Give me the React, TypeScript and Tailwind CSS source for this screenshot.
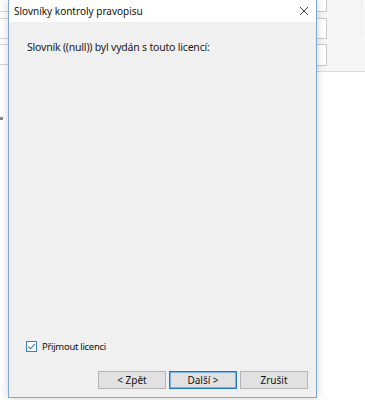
import React from "react";

const font = { fontFamily: '"Noto Sans", "Open Sans", Arial, sans-serif' };

function Btn({ children, primary }: { children: React.ReactNode; primary?: boolean }) {
  return (
    <div
      className={
        "w-[68px] h-[18px] flex items-center justify-center text-[10px] text-[#111] bg-[#e1e1e1] " +
        (primary ? "border border-[#1f74c8] shadow-[inset_0_0_0_1px_#7fb2e5]" : "border border-[#b5b5b5]")
      }
    >
      {children}
    </div>
  );
}

export default function App() {
  return (
    <div className="w-[365px] h-[400px] bg-white overflow-hidden flex" style={font}>
      {/* left background strip */}
      <div className="w-[8px] shrink-0 flex flex-col">
        <div className="h-[12px] border-b border-[#d6d6d6]" />
        <div className="h-[6px]" />
        <div className="h-[21px] border-t border-b border-[#d6d6d6]" />
        <div className="h-[5px]" />
        <div className="h-[21px] border-t border-b border-[#d6d6d6]" />
        <div className="h-[52px]" />
        <div className="w-[3px] h-[3px] bg-[#8a8a8a]" />
      </div>

      {/* dialog */}
      <div className="relative z-10 w-[309px] h-[398px] shrink-0 flex flex-col border-l border-r border-b border-[#7fa5d1] shadow-[0_0_9px_rgba(0,0,0,0.18)]">
        <div className="h-[22px] bg-white flex items-center justify-between pl-[5px] pr-[7px]">
          <span className="text-[10px] text-[#111]">Slovníky kontroly pravopisu</span>
          <svg width="10" height="10" viewBox="0 0 10 10">
            <path d="M1 1L9 9M9 1L1 9" stroke="#333" strokeWidth="0.9" />
          </svg>
        </div>
        <div className="flex-1 bg-[#f0f0f0] flex flex-col pl-[18px] pr-[8px] pb-[8px]">
          <div className="mt-[18px] text-[10.5px] tracking-[-0.2px] text-[#1a1a1a]">Slovník ((null)) byl vydán s touto licencí:</div>
          <div className="flex-1" />
          <div className="flex items-center gap-[5px] ml-[-1px]">
            <div className="w-[11px] h-[11px] bg-white border border-[#3b7fc0] flex items-center justify-center">
              <svg width="9" height="9" viewBox="0 0 9 9">
                <path d="M1.3 4.6L3.5 6.8L7.8 2" fill="none" stroke="#2a6fb8" strokeWidth="1.1" />
              </svg>
            </div>
            <span className="text-[9.5px] tracking-[-0.3px] text-[#111]">Přijmout licenci</span>
          </div>
          <div className="mt-[17px] flex justify-end gap-[3px]">
            <Btn>&lt; Zpět</Btn>
            <Btn primary>Další &gt;</Btn>
            <Btn>Zrušit</Btn>
          </div>
        </div>
      </div>

      {/* right background */}
      <div className="flex-1 flex flex-col">
        <div className="h-[72px] bg-[#f6f6f6] border-b border-[#dcdcdc] flex">
          <div className="w-[10px] flex flex-col">
            <div className="h-[12px] bg-white border-r border-b border-[#c9c9c9]" />
            <div className="h-[6px]" />
            <div className="h-[21px] bg-white border-r border-t border-b border-[#c9c9c9]" />
            <div className="h-[5px]" />
            <div className="h-[22px] bg-white border-r border-t border-b border-[#c9c9c9]" />
          </div>
          <div className="flex-1" />
          <div className="w-[1px] h-[36px] mr-[3px] border-r border-dotted border-[#e2e2e2]" />
        </div>
      </div>
    </div>
  );
}
